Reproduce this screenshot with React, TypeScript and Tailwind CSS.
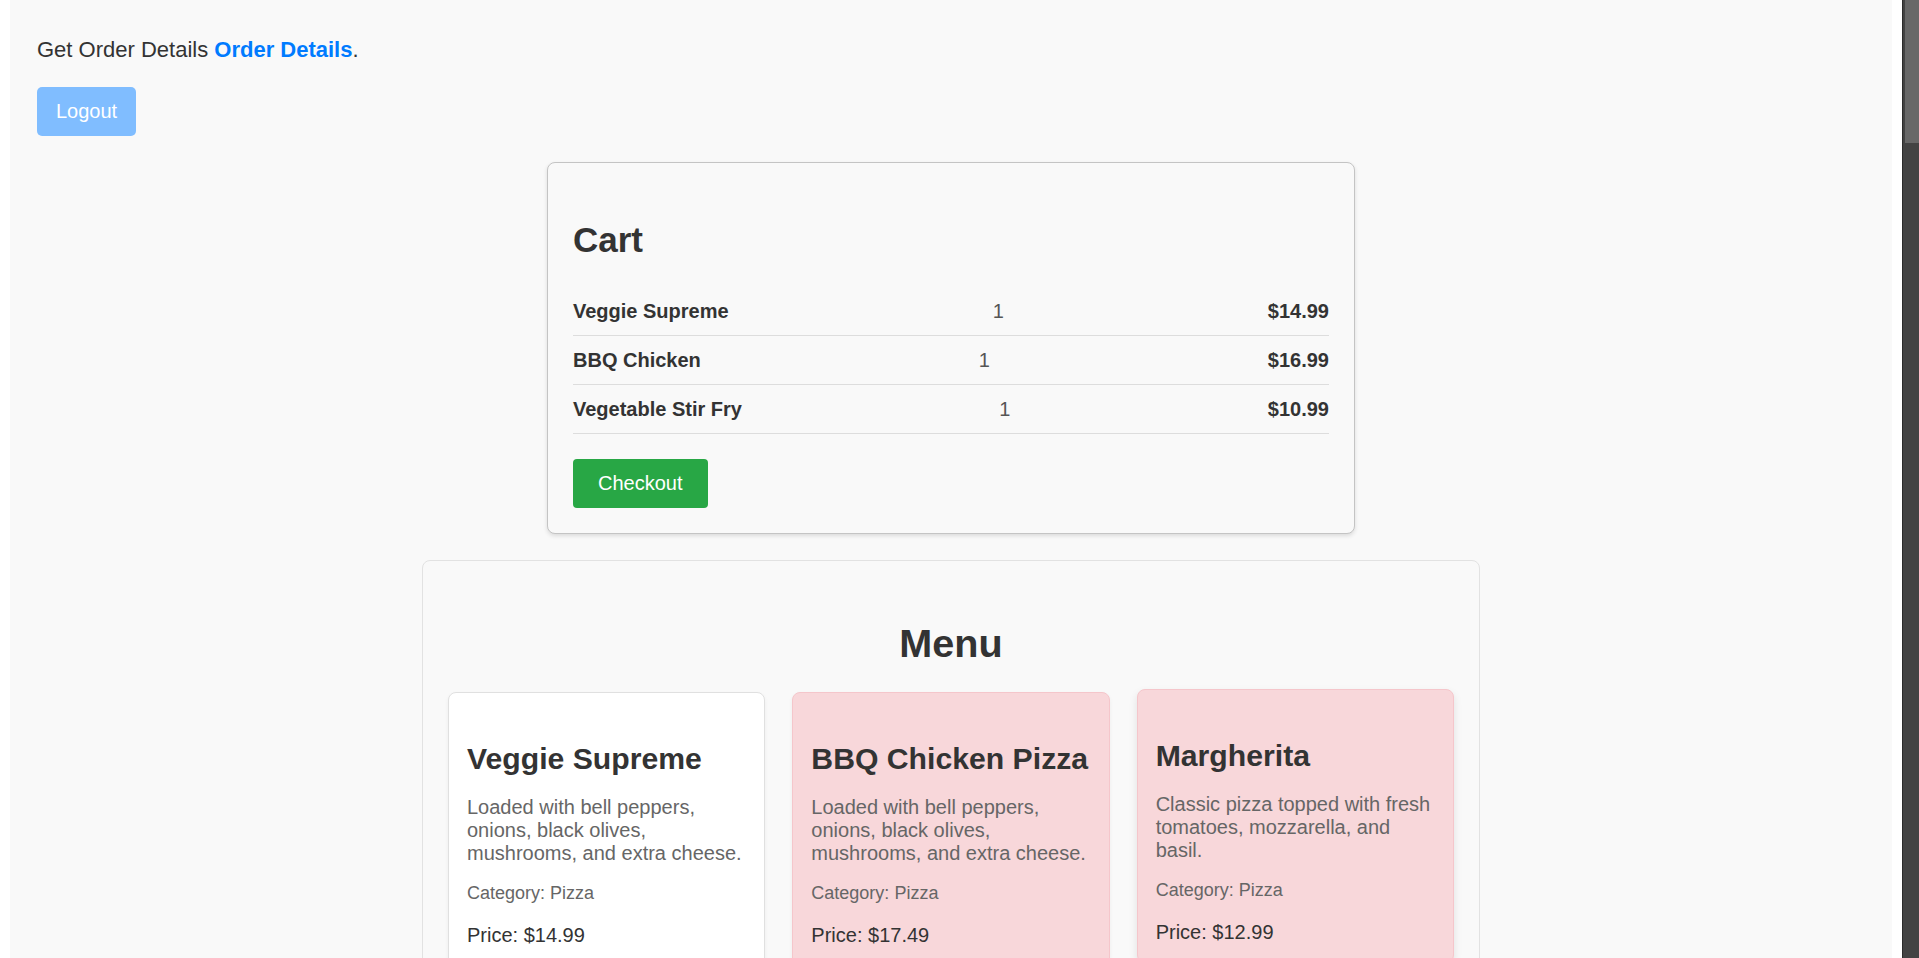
import React from 'react';

const cartItems = [
  { name: 'Veggie Supreme', qty: 1, price: '$14.99' },
  { name: 'BBQ Chicken', qty: 1, price: '$16.99' },
  { name: 'Vegetable Stir Fry', qty: 1, price: '$10.99' },
];

const menuItems = [
  {
    name: 'Veggie Supreme',
    description: 'Loaded with bell peppers, onions, black olives, mushrooms, and extra cheese.',
    category: 'Pizza',
    price: '$14.99',
    inCart: false,
    raised: false,
  },
  {
    name: 'BBQ Chicken Pizza',
    description: 'Loaded with bell peppers, onions, black olives, mushrooms, and extra cheese.',
    category: 'Pizza',
    price: '$17.49',
    inCart: true,
    raised: false,
  },
  {
    name: 'Margherita',
    description: 'Classic pizza topped with fresh tomatoes, mozzarella, and basil.',
    category: 'Pizza',
    price: '$12.99',
    inCart: true,
    raised: true,
  },
];

function Cart() {
  return (
    <div className="mx-auto mt-[26px] w-[808px] rounded-[8px] border border-[#c4c4c4] bg-[#f9f9f9] px-[25px] pt-[25px] pb-[25px] shadow-[0_2px_4px_rgba(0,0,0,0.12)]">
      <h2 className="mt-[32px] mb-[28px] text-[35px] font-bold leading-[39px]">Cart</h2>
      {cartItems.map((item) => (
        <div
          key={item.name}
          className="flex items-center justify-between border-b border-[#dddddd] py-[12px] text-[20px] leading-[24px]"
        >
          <span className="font-bold">{item.name}</span>
          <span className="text-[#555]">{item.qty}</span>
          <span className="font-bold">{item.price}</span>
        </div>
      ))}
      <button className="mt-[25px] block rounded-[4px] bg-[#28a745] px-[25px] py-[13px] text-[20px] leading-[23px] text-white">
        Checkout
      </button>
    </div>
  );
}

function MenuCard({ item }: { item: (typeof menuItems)[number] }) {
  return (
    <div
      className={`rounded-[8px] border p-[18px] ${
        item.inCart
          ? 'border-[#f5c6cb] bg-[#f8d7da]'
          : 'border-[#e0e0e0] bg-white'
      } ${
        item.raised
          ? '-translate-y-[3px] shadow-[0_4px_8px_rgba(0,0,0,0.1)]'
          : 'shadow-[0_2px_4px_rgba(0,0,0,0.05)]'
      }`}
    >
      <h3 className="mt-[31px] text-[30.2px] font-bold leading-[33px]">{item.name}</h3>
      <p className="mt-[21px] text-[20px] leading-[23px] text-[#666]">{item.description}</p>
      <p className="mt-[18px] text-[18px] leading-[21px] text-[#666]">Category: {item.category}</p>
      <p className="mt-[20px] text-[20px] leading-[23px]">Price: {item.price}</p>
    </div>
  );
}

export default function App() {
  return (
    <div className="flex h-[958px] overflow-hidden bg-white font-['Liberation_Sans',Arial,sans-serif] text-[#333]">
      <div className="flex-1 px-[10px]">
        <div className="h-full bg-[#f9f9f9] px-[27px] pt-[37px]">
          <p className="text-[22px] leading-[25px]">
            Get Order Details{' '}
            <a href="#" className="font-bold text-[#007bff]">
              Order Details
            </a>
            .
          </p>
          <button className="mt-[25px] block rounded-[5px] bg-[#80bdff] px-[19px] py-[13px] text-[20px] leading-[23px] text-white">
            Logout
          </button>

          <Cart />

          {/* Menu */}
          <div className="mx-auto mt-[26px] w-[1058px] rounded-[8px] border border-[#e2e2e2] bg-[#f9f9f9] px-[25px] pt-[25px] pb-[25px]">
            <h2 className="mt-[35px] mb-[27px] text-center text-[39.6px] font-bold leading-[44px]">Menu</h2>
            <div className="grid grid-cols-3 items-start gap-[27px]">
              {menuItems.map((item) => (
                <MenuCard key={item.name} item={item} />
              ))}
            </div>
          </div>
        </div>
      </div>

      {/* scrollbar */}
      <div className="w-[17px] border-l border-[#2b2b2b] bg-[#434343] pl-[2px]">
        <div className="h-[143px] bg-[#686868]" />
      </div>
    </div>
  );
}
